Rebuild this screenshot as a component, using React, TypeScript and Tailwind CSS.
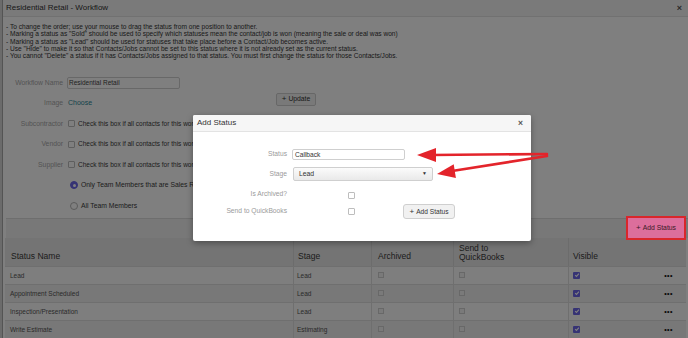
import React from "react";

function Box({ checked }: { checked?: boolean }) {
  if (checked) {
    return (
      <span className="inline-flex w-[7px] h-[7px] rounded-[1px] bg-[#6c66e8] items-center justify-center shrink-0">
        <svg viewBox="0 0 8 8" className="w-[6px] h-[6px]">
          <path d="M1.5 4.2 L3.3 5.9 L6.6 2.1" stroke="white" strokeWidth="1.5" fill="none" />
        </svg>
      </span>
    );
  }
  return <span className="inline-block w-[7px] h-[7px] rounded-[1px] border border-[#bdbdbd] bg-white shrink-0" />;
}

function Radio({ checked }: { checked?: boolean }) {
  return (
    <span
      className={
        "inline-flex w-[8px] h-[8px] rounded-full items-center justify-center shrink-0 border " +
        (checked ? "border-[#6c66e8] bg-[#6c66e8]" : "border-[#b5b5b5] bg-white")
      }
    >
      {checked ? <span className="w-[3px] h-[3px] rounded-full bg-white" /> : null}
    </span>
  );
}

const instructions = [
  "- To change the order; use your mouse to drag the status from one position to another.",
  '- Marking a status as "Sold" should be used to specify which statuses mean the contact/job is won (meaning the sale or deal was won)',
  '- Marking a status as "Lead" should be used for statuses that take place before a Contact/Job becomes active.',
  '- Use "Hide" to make it so that Contacts/Jobs cannot be set to this status where it is not already set as the current status.',
  '- You cannot "Delete" a status if it has Contacts/Jobs assigned to that status. You must first change the status for those Contacts/Jobs.',
];

const rows = [
  { name: "Lead", stage: "Lead" },
  { name: "Appointment Scheduled", stage: "Lead" },
  { name: "Inspection/Presentation", stage: "Lead" },
  { name: "Write Estimate", stage: "Estimating" },
];

function Label({ children }: { children: React.ReactNode }) {
  return <div className="w-[57px] shrink-0 text-right text-[6.8px] text-[#a8a8a8] whitespace-nowrap">{children}</div>;
}

export default function App() {
  return (
    <div className="relative w-[688px] h-[338px] overflow-hidden bg-[#dadada] flex [font-family:'Liberation_Sans',Arial,sans-serif]">
      <div className="w-[3px] shrink-0 bg-[#d6d6d6] border-r border-[#a8a8a8]" />
      <div className="flex-1 min-w-0 flex flex-col bg-white">
        {/* outer header */}
        <div className="h-[17px] shrink-0 bg-[#f5f5f5] border-b border-[#e2e2e2] flex items-center justify-between pl-[3px] pr-[6px]">
          <span className="text-[8px] text-[#333] whitespace-nowrap">Residential Retail - Workflow</span>
          <span className="text-[9px] font-bold text-[#555] leading-none">×</span>
        </div>
        {/* body */}
        <div className="pl-[3px] pt-[6px] flex flex-col">
          <div className="text-[6.6px] leading-[7.3px] text-[#333] whitespace-nowrap">
            {instructions.map((l, i) => (
              <div key={i}>{l}</div>
            ))}
          </div>
          <div className="mt-[13px] flex flex-col">
            <div className="h-[20.5px] flex items-center">
              <Label>Workflow Name</Label>
              <div className="ml-[4px] w-[113px] h-[12px] border border-[#d0d0d0] rounded-[2px] flex items-center pl-[1px] text-[6.5px] text-[#444] whitespace-nowrap">
                Residential Retail
              </div>
            </div>
            <div className="h-[20.5px] flex items-center">
              <Label>Image</Label>
              <div className="ml-[5px] w-[208px] text-[7px] text-[#2b8796]">Choose</div>
              <div className="self-start h-[13px] w-[40px] border border-[#cfcfcf] rounded-[2px] bg-[#f3f3f3] flex items-center justify-center text-[6.8px] text-[#333] whitespace-nowrap">
                <span className="text-[8px] leading-none mr-[2px]">+</span>Update
              </div>
            </div>
            {["Subcontractor", "Vendor", "Supplier"].map((l) => (
              <div key={l} className="h-[20.5px] flex items-center">
                <Label>{l}</Label>
                <div className="ml-[5px] flex items-center gap-[3px] text-[6.5px] text-[#3a3a3a] whitespace-nowrap">
                  <Box />
                  <span>Check this box if all contacts for this workflow are {l.toLowerCase()}s</span>
                </div>
              </div>
            ))}
            <div className="h-[20.5px] flex items-center pl-[64px] gap-[3px] text-[6.8px] text-[#3a3a3a] whitespace-nowrap">
              <Radio checked />
              <span>Only Team Members that are Sales Reps</span>
            </div>
            <div className="h-[20.5px] flex items-center pl-[64px] gap-[3px] text-[6.8px] text-[#3a3a3a] whitespace-nowrap">
              <Radio />
              <span>All Team Members</span>
            </div>
          </div>
          {/* toolbar band */}
          <div className="h-[20px] mt-[2px] bg-[#f1f1f1] border-t border-[#dcdcdc] flex items-center justify-end pr-[2px]">
            <div className="relative z-10 w-[60px] h-[24px] border-[2px] border-[#d9262b] bg-[#dc6e9c] flex items-center justify-center text-[6.8px] text-[#3a1a28] whitespace-nowrap">
              <span className="text-[8px] leading-none mr-[2px]">+</span>Add Status
            </div>
          </div>
          {/* table */}
          <div className="-ml-px w-[681px] flex flex-col text-[#555]">
            <div className="grid grid-cols-[289px_78px_82px_115px_117px] h-[28px] bg-[#e8e8e8] text-[8.5px] text-[#3a3a3a]">
              <div className="flex items-end pb-[3px] pl-[6px] border-r border-[#d8d8d8]">Status Name</div>
              <div className="flex items-end pb-[3px] pl-[4px] border-r border-[#d8d8d8]">Stage</div>
              <div className="flex items-end pb-[3px] pl-[6px] border-r border-[#d8d8d8]">Archived</div>
              <div className="flex items-end pb-[4px] pl-[5px] leading-[9px] border-r border-[#d8d8d8]">
                Send to
                <br />
                QuickBooks
              </div>
              <div className="flex items-end pb-[3px] pl-[4px]">Visible</div>
            </div>
            {rows.map((r, i) => (
              <div
                key={i}
                className={
                  "grid grid-cols-[289px_78px_82px_115px_117px] h-[18px] text-[6.5px] border-t border-[#dedede] " +
                  (i % 2 === 0 ? "bg-[#fdfdfd]" : "bg-[#f0f0f0]")
                }
              >
                <div className="flex items-center pl-[5px] border-r border-[#dedede]">{r.name}</div>
                <div className="flex items-center pl-[3px] border-r border-[#dedede]">{r.stage}</div>
                <div className="flex items-center pl-[6px] border-r border-[#dedede]">
                  <span className="inline-block w-[6px] h-[6px] border border-[#d0d0d0] bg-[#f4f4f4]" />
                </div>
                <div className="flex items-center pl-[5px] border-r border-[#dedede]">
                  <span className="inline-block w-[6px] h-[6px] border border-[#d0d0d0] bg-[#f4f4f4]" />
                </div>
                <div className="flex items-center justify-between pl-[4px] pr-[13px]">
                  <Box checked />
                  <span className="text-[7px] tracking-[0.5px] text-[#111] font-bold leading-none">•••</span>
                </div>
              </div>
            ))}
          </div>
        </div>
      </div>

      {/* backdrop */}
      <div className="absolute inset-0 bg-black/50" />

      {/* Add Status modal */}
      <div className="absolute left-[193px] top-[115px] w-[338px] h-[126px] bg-white rounded-[2px] shadow-[0_2px_6px_rgba(0,0,0,0.35)] flex flex-col z-20">
        <div className="h-[17px] bg-[#f6f6f6] border-b border-[#e3e3e3] flex items-center justify-between pl-[4px] pr-[8px] rounded-t-[2px]">
          <span className="text-[8px] text-[#333]">Add Status</span>
          <span className="text-[8.5px] font-bold text-[#555] leading-none">×</span>
        </div>
        <div className="pt-[17px] flex flex-col">
          <div className="h-[11px] flex items-center">
            <div className="w-[94px] text-right text-[6.7px] text-[#9a9a9a]">Status</div>
            <div className="ml-[5px] w-[113px] h-[11px] border border-[#cfcfcf] rounded-[2px] flex items-center pl-[2px] text-[6.6px] text-[#333]">
              Callback
            </div>
          </div>
          <div className="mt-[7px] h-[14px] flex items-center">
            <div className="w-[94px] text-right text-[6.7px] text-[#9a9a9a]">Stage</div>
            <div className="ml-[6px] w-[140px] h-[14px] border border-[#cfcfcf] rounded-[2px] bg-gradient-to-b from-[#fbfbfb] to-[#e9e9e9] flex items-center justify-between pl-[5px] pr-[5px] text-[6.8px] text-[#333]">
              <span>Lead</span>
              <span className="text-[5px]">▼</span>
            </div>
          </div>
          <div className="mt-[6px] h-[14px] flex items-center">
            <div className="w-[94px] text-right text-[6.7px] text-[#9a9a9a]">Is Archived?</div>
            <div className="ml-[61px]">
              <Box />
            </div>
          </div>
          <div className="mt-[3px] h-[15px] flex items-center">
            <div className="w-[94px] text-right text-[6.7px] text-[#9a9a9a]">Send to QuickBooks</div>
            <div className="ml-[61px] flex">
              <Box />
            </div>
            <div className="ml-[48px] w-[52px] h-[15px] border border-[#cfcfcf] rounded-[3px] bg-[#f1f1f1] flex items-center justify-center text-[6.6px] text-[#333] whitespace-nowrap">
              <span className="text-[8px] leading-none mr-[2px]">+</span>Add Status
            </div>
          </div>
        </div>
      </div>

      {/* arrows annotation */}
      <svg className="absolute inset-0 w-[688px] h-[338px] pointer-events-none z-30" viewBox="0 0 688 338">
        <line x1="547" y1="154" x2="432" y2="155" stroke="#e3242b" strokeWidth="2.6" strokeLinecap="round" />
        <polygon points="417,155 436,148 436,162" fill="#e3242b" />
        <line x1="547" y1="156" x2="452" y2="171" stroke="#e3242b" strokeWidth="2.6" strokeLinecap="round" />
        <polygon points="437,174 453.7,164.3 455.9,178.1" fill="#e3242b" />
      </svg>
    </div>
  );
}
